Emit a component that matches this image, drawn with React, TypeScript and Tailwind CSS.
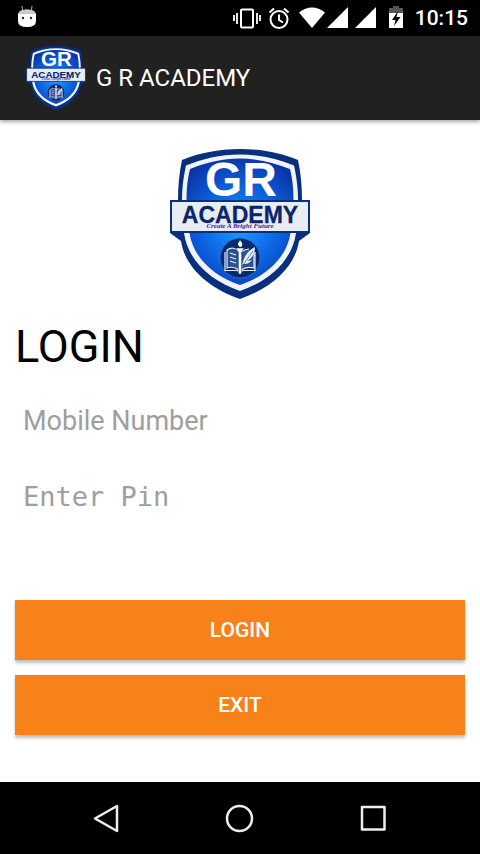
import { ReactNode } from "react";

type LogoProps = {
    className?: string;
    id: string;
}

const Logo = ({ className, id }: LogoProps) => {
    return (
        <svg viewBox="0 0 140 150" className={className} role="img" aria-label="GR Academy">
            <defs>
                <radialGradient id={id} gradientUnits="userSpaceOnUse" cx="70" cy="78" r="72">
                    <stop offset="0" stopColor="#1c9cff" />
                    <stop offset="0.55" stopColor="#0b62e0" />
                    <stop offset="1" stopColor="#0a35a6" />
                </radialGradient>
            </defs>
            <path d="M70 0C48 0 29 4 12 11C9 25 8 38 8 51H0V84L11 92C15 118 38 139 70 150C102 139 125 118 129 92L140 84V51H132C132 38 131 25 128 11C111 4 92 0 70 0Z" fill="#08307f" />
            <path d="M70 5.500C50 5.500 32 10 16 16.500C13 30 12 41 12 52V70L14 84C18 112 41 132 70 142C99 132 122 112 126 84L128 70V52C128 41 127 30 124 16.500C108 10 90 5.500 70 5.500Z" fill="#f1f4fc" />
            <path d="M70 9.500C52 9.500 35 14 20 20C17 32 16.500 42 16.500 54V70L19.500 84C23 108 43 127 70 136C97 127 117 108 120.500 84L123.500 70V54C123.500 42 123 32 120 20C105 14 88 9.500 70 9.500Z" fill={`url(#${id})`} />
            <text x="71" y="47" textAnchor="middle" fontFamily="Liberation Sans, sans-serif" fontWeight="700" fontSize="48" fill="#fff">GR</text>
            <path d="M1 52H139V83H1Z" fill="#e9ecf3" stroke="#08307f" strokeWidth="2" />
            <text x="70" y="74" textAnchor="middle" fontFamily="Liberation Sans, sans-serif" fontWeight="700" fontSize="23" fill="#0b2569" stroke="#0b2569" strokeWidth="0.300">ACADEMY</text>
            <text x="70" y="79" textAnchor="middle" fontFamily="Liberation Serif, serif" fontWeight="700" fontStyle="italic" fontSize="7" fill="#2630ad">Create A Bright Future</text>
            <circle cx="70" cy="109" r="20" fill="#082a72" stroke="#3a86e8" strokeWidth="0.600" />
            <path d="M57 101C61 98 66 99 69 102V121C65 118 60 118 57 119ZM84 103V119C80 118 75 118 71 121V103C74 101 76 100 79 100" fill="#2c518f" stroke="#e8eef8" strokeWidth="1.200" />
            <path d="M55 103V121.500H67L70 123L73 121.500H85V103M60 104L66 106M60 108L66 110M60 112L66 114" fill="none" stroke="#e8eef8" strokeWidth="1.200" />
            <path d="M72 118C73 109 77 102 85 98C85 103 83 109 77 112L82 111C79 115 76 115 73 115Z" fill="#e8eef8" />
            <path d="M73 116L83 102" stroke="#2c518f" strokeWidth="0.700" />
            <path d="M66 99H74L72 103H71.500V125H68.500V103H68Z" fill="#fff" stroke="#082a72" strokeWidth="0.500" />
            <path d="M70 98C66 95 69 94 70 91C71 93 74 95 71 98Z" fill="#fff" />
        </svg>
    );
}

const StatusBar = () => {
    return (
        <div className="flex h-9 items-center bg-black pl-4 pr-3 text-white">
            <svg viewBox="0 0 22 24" className="h-6 w-[22px]">
                <path d="M7 6L6 0M15 6L16 0" stroke="#999" strokeWidth="1.200" />
                <path d="M4 5Q11 2 18 5L20 8V15Q20 21 11 21Q2 21 2 15V8Z" fill="#fff" />
                <path d="M4 5Q11 2 18 5L20 8H2Z" fill="#c9c9c9" />
                <circle cx="7" cy="12" r="1.200" fill="#222" />
                <circle cx="15" cy="12" r="1.200" fill="#222" />
            </svg>
            <div className="ml-auto flex items-center">
                <svg viewBox="0 0 28 24" className="h-6 w-7">
                    <rect x="8" y="3.500" width="12" height="18" rx="1" fill="none" stroke="#fff" strokeWidth="2" />
                    <path d="M1 9V15M4 7V18M24 7V18M27 9V15" stroke="#fff" strokeWidth="1.800" />
                </svg>
                <svg viewBox="0 0 24 24" className="ml-1.5 h-6 w-6" fill="none" stroke="#fff" strokeWidth="2">
                    <circle cx="12" cy="13.500" r="8.500" />
                    <path d="M12 8.500V14L16 16.500M2.500 6.500L7 2.500M21.500 6.500L17 2.500" />
                </svg>
                <svg viewBox="0 0 26 24" className="ml-2 h-6 w-[26px]">
                    <path d="M0 6.500Q13 -3.500 26 6.500L13 22Z" fill="#fff" />
                </svg>
                <svg viewBox="0 0 22 24" className="ml-0.5 h-6 w-[22px]">
                    <path d="M0 22H21V1Z" fill="#fff" />
                </svg>
                <svg viewBox="0 0 22 24" className="ml-1.5 h-6 w-[22px]">
                    <path d="M0 22H21V1Z" fill="#fff" />
                </svg>
                <svg viewBox="0 0 14 24" className="ml-3 h-6 w-[14px]">
                    <path d="M4 0H10V2H14V7H0V2H4Z" fill="#555" />
                    <path d="M0 7H14V22H0Z" fill="#fff" />
                    <path d="M9 5L3 14H6.500L5 20L11.500 11H7.500Z" fill="#000" />
                </svg>
                <span className="ml-3 text-[21px] font-medium leading-6">10:15</span>
            </div>
        </div>
    );
}

type FieldProps = {
    label: string;
    type: string;
    className?: string;
}

const Field = ({ label, type, className = "" }: FieldProps) => {
    return (
        <input
            type={type}
            aria-label={label}
            placeholder={label}
            className={`h-15 w-full bg-transparent px-2 text-[27px] text-black outline-none placeholder:text-[#9e9e9e] ${className}`}
        />
    );
}

const Button = ({ children }: { children: ReactNode }) => {
    return (
        <button type="button" className="h-15 w-full bg-[#f8821a] pt-0.5 text-[21px] font-medium text-white shadow-[0_3px_3px_rgba(0,0,0,0.25)]">
            {children}
        </button>
    );
}

const NavBar = () => {
    return (
        <nav className="flex h-18 items-center justify-center gap-26 bg-black">
            <button type="button" aria-label="Back">
                <svg viewBox="0 0 30 30" className="h-[30px] w-[30px]" fill="none" stroke="#eee" strokeWidth="2.500" strokeLinejoin="round">
                    <path d="M4 15.500L26 3V28Z" />
                </svg>
            </button>
            <button type="button" aria-label="Home">
                <svg viewBox="0 0 30 30" className="h-[30px] w-[30px]" fill="none" stroke="#eee" strokeWidth="2.500">
                    <circle cx="14.500" cy="15.500" r="12.500" />
                </svg>
            </button>
            <button type="button" aria-label="Recent apps">
                <svg viewBox="0 0 30 30" className="h-[30px] w-[30px]" fill="none" stroke="#eee" strokeWidth="2.500" strokeLinejoin="round">
                    <rect x="3" y="4" width="22.500" height="22.500" />
                </svg>
            </button>
        </nav>
    );
}

const App = () => {
    return (
        <div className="flex min-h-screen flex-col bg-white font-['Roboto',sans-serif]">
            <StatusBar />
            <header className="flex h-21 items-center bg-[#212121] pl-6 text-white shadow-[0_2px_4px_rgba(0,0,0,0.35)]">
                <Logo id="bar-shield" className="h-16 w-16" />
                <h1 className="ml-2 text-2xl">G R ACADEMY</h1>
            </header>
            <main className="flex flex-1 flex-col px-[15px] pt-[29px]">
                <Logo id="main-shield" className="h-[150px] w-[140px] self-center" />
                <h2 className="mt-5 text-[45px] leading-14 text-black">LOGIN</h2>
                <form className="mt-4 flex flex-col gap-[15px]">
                    <Field label="Mobile Number" type="tel" />
                    <Field label="Enter Pin" type="password" className="font-['DejaVu_Sans_Mono',monospace]" />
                    <div className="mt-[59px] flex flex-col gap-[15px]">
                        <Button>LOGIN</Button>
                        <Button>EXIT</Button>
                    </div>
                </form>
            </main>
            <NavBar />
        </div>
    );
}

export default App;
